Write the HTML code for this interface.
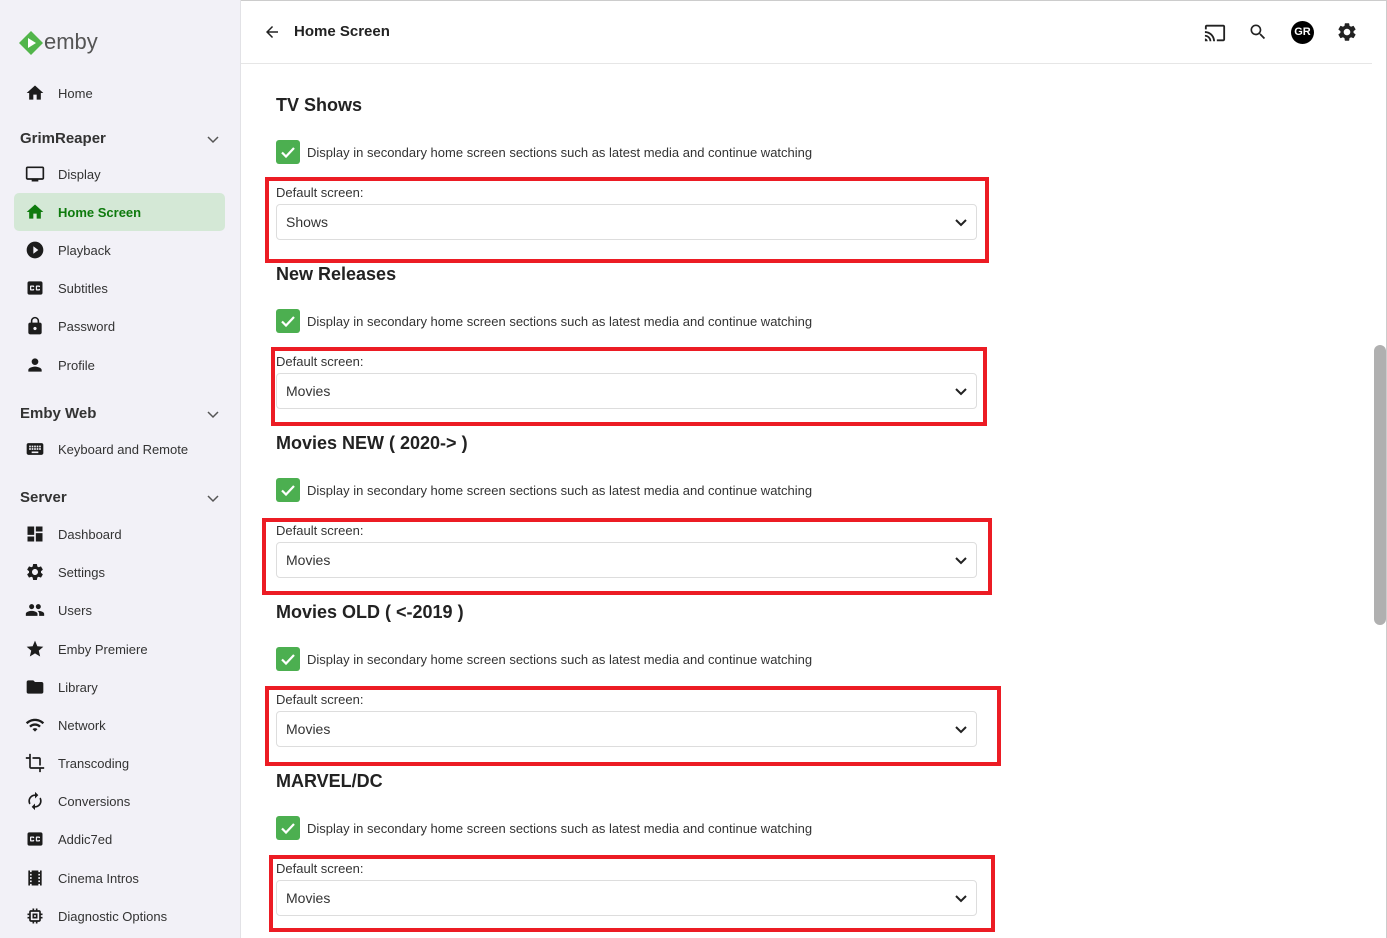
<!DOCTYPE html>
<html><head><meta charset="utf-8"><style>
*{margin:0;padding:0;box-sizing:border-box}
body{width:1387px;height:938px;overflow:hidden;background:#fff;font-family:"Liberation Sans",sans-serif;color:#222;position:relative}
.sb{position:absolute;left:0;top:0;width:241px;height:938px;background:#f2f1f7;border-right:1px solid #e2e2e6}
.a{position:absolute}
.ni{position:absolute;left:0;width:240px;height:20px;font-size:13px;color:#333}
.ni svg{position:absolute;left:25px;top:0;width:20px;height:20px;fill:#1c1c1c}
.ni span{position:absolute;left:58px;top:3px}
.hd{position:absolute;left:20px;font-size:15px;font-weight:bold;color:#333}
.chev{position:absolute;left:206px;width:14px;height:14px}
.h2{position:absolute;left:276px;font-size:18px;font-weight:bold;color:#222}
.cb{position:absolute;left:276px;width:24px;height:24px;background:#4caf50;border-radius:3px}
.cbt{position:absolute;left:307px;font-size:13px;color:#333}
.lbl{position:absolute;left:276px;font-size:13px;color:#333}
.sel{position:absolute;left:276px;width:701px;height:36px;border:1px solid #ddd;border-radius:4px;font-size:14px;color:#333;padding:9px 0 0 9px}
.sel svg{position:absolute;right:8px;top:10px}
.red{position:absolute;border:4px solid #ec1c24}
</style></head><body>
<div class="a" style="left:0;top:0;width:1387px;height:1px;background:#ccc"></div>
<div class="sb"></div>
<!-- logo -->
<svg class="a" style="left:19px;top:31px" width="24" height="24" viewBox="0 0 24 24"><path d="M12 0 L24 12 L12 24 L0 12Z" fill="#52b54b"/><path d="M9 7 L17 12 L9 17Z" fill="#fff"/></svg>
<div class="a" style="left:44px;top:29px;font-size:22px;color:#555">emby</div>

<div class="ni" style="top:83px"><svg viewBox="0 0 24 24"><path d="M10 20v-6h4v6h5v-8h3L12 3 2 12h3v8z"/></svg><span>Home</span></div>
<div class="hd" style="top:130px">GrimReaper</div>
<svg class="chev" style="top:132px" viewBox="0 0 14 14"><path d="M2 5l5 5 5-5" stroke="#555" stroke-width="1.5" fill="none"/></svg>
<div class="ni" style="top:164px"><svg viewBox="0 0 24 24"><path d="M21 3H3c-1.1 0-2 .9-2 2v12c0 1.1.9 2 2 2h5v2h8v-2h5c1.1 0 2-.9 2-2V5c0-1.1-.9-2-2-2zm0 14H3V5h18v12z"/></svg><span>Display</span></div>
<div class="a" style="left:14px;top:193px;width:211px;height:38px;background:#d4e8d6;border-radius:5px"></div>
<div class="ni" style="top:202px"><svg viewBox="0 0 24 24" style="fill:#0e7a0d"><path d="M10 20v-6h4v6h5v-8h3L12 3 2 12h3v8z"/></svg><span style="color:#0e7a0d;font-weight:bold">Home Screen</span></div>
<div class="ni" style="top:240px"><svg viewBox="0 0 24 24"><path d="M12 2C6.48 2 2 6.48 2 12s4.48 10 10 10 10-4.48 10-10S17.52 2 12 2zm-2 14.5v-9l6 4.5-6 4.5z"/></svg><span>Playback</span></div>
<div class="ni" style="top:278px"><svg viewBox="0 0 24 24"><path d="M19 4H5c-1.11 0-2 .9-2 2v12c0 1.1.89 2 2 2h14c1.1 0 2-.9 2-2V6c0-1.1-.9-2-2-2zm-8 7H9.5v-.5h-2v3h2V13H11v1c0 .55-.45 1-1 1H7c-.55 0-1-.45-1-1v-4c0-.55.45-1 1-1h3c.55 0 1 .45 1 1v1zm7 0h-1.5v-.5h-2v3h2V13H18v1c0 .55-.45 1-1 1h-3c-.55 0-1-.45-1-1v-4c0-.55.45-1 1-1h3c.55 0 1 .45 1 1v1z"/></svg><span>Subtitles</span></div>
<div class="ni" style="top:316px"><svg viewBox="0 0 24 24"><path d="M18 8h-1V6c0-2.76-2.24-5-5-5S7 3.24 7 6v2H6c-1.1 0-2 .9-2 2v10c0 1.1.9 2 2 2h12c1.1 0 2-.9 2-2V10c0-1.1-.9-2-2-2zm-6 9c-1.1 0-2-.9-2-2s.9-2 2-2 2 .9 2 2-.9 2-2 2zm3.1-9H8.9V6c0-1.71 1.39-3.1 3.1-3.1 1.71 0 3.1 1.39 3.1 3.1v2z"/></svg><span>Password</span></div>
<div class="ni" style="top:355px"><svg viewBox="0 0 24 24"><path d="M12 12c2.21 0 4-1.79 4-4s-1.79-4-4-4-4 1.79-4 4 1.79 4 4 4zm0 2c-2.67 0-8 1.34-8 4v2h16v-2c0-2.66-5.33-4-8-4z"/></svg><span>Profile</span></div>
<div class="hd" style="top:405px">Emby Web</div>
<svg class="chev" style="top:407px" viewBox="0 0 14 14"><path d="M2 5l5 5 5-5" stroke="#555" stroke-width="1.5" fill="none"/></svg>
<div class="ni" style="top:439px"><svg viewBox="0 0 24 24"><path d="M20 5H4c-1.1 0-2 .9-2 2v10c0 1.1.9 2 2 2h16c1.1 0 2-.9 2-2V7c0-1.1-.9-2-2-2zm-9 3h2v2h-2V8zm0 3h2v2h-2v-2zM8 8h2v2H8V8zm0 3h2v2H8v-2zm-1 2H5v-2h2v2zm0-3H5V8h2v2zm9 7H8v-2h8v2zm0-4h-2v-2h2v2zm0-3h-2V8h2v2zm3 3h-2v-2h2v2zm0-3h-2V8h2v2z"/></svg><span>Keyboard and Remote</span></div>
<div class="hd" style="top:489px">Server</div>
<svg class="chev" style="top:491px" viewBox="0 0 14 14"><path d="M2 5l5 5 5-5" stroke="#555" stroke-width="1.5" fill="none"/></svg>
<div class="ni" style="top:524px"><svg viewBox="0 0 24 24"><path d="M3 13h8V3H3v10zm0 8h8v-6H3v6zm10 0h8V11h-8v10zm0-18v6h8V3h-8z"/></svg><span>Dashboard</span></div>
<div class="ni" style="top:562px"><svg viewBox="0 0 24 24"><path d="M19.14 12.94c.04-.3.06-.61.06-.94 0-.32-.02-.64-.07-.94l2.03-1.58c.18-.14.23-.41.12-.61l-1.92-3.32c-.12-.22-.37-.29-.59-.22l-2.39.96c-.5-.38-1.03-.7-1.62-.94l-.36-2.54c-.04-.24-.24-.41-.48-.41h-3.84c-.24 0-.43.17-.47.41l-.36 2.54c-.59.24-1.13.57-1.62.94l-2.39-.96c-.22-.08-.47 0-.59.22L2.74 8.87c-.12.21-.08.47.12.61l2.03 1.58c-.05.3-.09.63-.09.94s.02.64.07.94l-2.03 1.58c-.18.14-.23.41-.12.61l1.92 3.32c.12.22.37.29.59.22l2.39-.96c.5.38 1.03.7 1.62.94l.36 2.54c.05.24.24.41.48.41h3.84c.24 0 .44-.17.47-.41l.36-2.54c.59-.24 1.13-.56 1.62-.94l2.39.96c.22.08.47 0 .59-.22l1.92-3.32c.12-.22.07-.47-.12-.61l-2.01-1.58zM12 15.6c-1.98 0-3.6-1.62-3.6-3.6s1.62-3.6 3.6-3.6 3.6 1.62 3.6 3.6-1.62 3.6-3.6 3.6z"/></svg><span>Settings</span></div>
<div class="ni" style="top:600px"><svg viewBox="0 0 24 24"><path d="M16 11c1.66 0 2.99-1.34 2.99-3S17.66 5 16 5c-1.66 0-3 1.34-3 3s1.34 3 3 3zm-8 0c1.66 0 2.99-1.34 2.99-3S9.66 5 8 5C6.34 5 5 6.34 5 8s1.34 3 3 3zm0 2c-2.33 0-7 1.17-7 3.5V19h14v-2.5c0-2.33-4.67-3.5-7-3.5zm8 0c-.29 0-.62.02-.97.05 1.16.84 1.97 1.97 1.97 3.45V19h6v-2.5c0-2.33-4.67-3.5-7-3.5z"/></svg><span>Users</span></div>
<div class="ni" style="top:639px"><svg viewBox="0 0 24 24"><path d="M12 17.27L18.18 21l-1.64-7.03L22 9.24l-7.19-.61L12 2 9.19 8.63 2 9.24l5.46 4.73L5.82 21z"/></svg><span>Emby Premiere</span></div>
<div class="ni" style="top:677px"><svg viewBox="0 0 24 24"><path d="M10 4H4c-1.1 0-2 .9-2 2v12c0 1.1.9 2 2 2h16c1.1 0 2-.9 2-2V8c0-1.1-.9-2-2-2h-8l-2-2z"/></svg><span>Library</span></div>
<div class="ni" style="top:715px"><svg viewBox="0 0 24 24"><path d="M1 9l2 2c4.97-4.97 13.03-4.97 18 0l2-2C16.93 2.93 7.08 2.93 1 9zm8 8l3 3 3-3c-1.65-1.66-4.34-1.66-6 0zm-4-4l2 2c2.76-2.76 7.24-2.76 10 0l2-2C15.14 9.14 8.87 9.14 5 13z"/></svg><span>Network</span></div>
<div class="ni" style="top:753px"><svg viewBox="0 0 24 24"><path d="M17 15h2V7c0-1.1-.9-2-2-2H9v2h8v8zM7 17V1H5v4H1v2h4v10c0 1.1.9 2 2 2h10v4h2v-4h4v-2H7z"/></svg><span>Transcoding</span></div>
<div class="ni" style="top:791px"><svg viewBox="0 0 24 24"><path d="M12 6v3l4-4-4-4v3c-4.42 0-8 3.58-8 8 0 1.57.46 3.03 1.24 4.26L6.7 14.8c-.45-.83-.7-1.79-.7-2.8 0-3.31 2.69-6 6-6zm6.76 1.74L17.3 9.2c.44.84.7 1.79.7 2.8 0 3.31-2.69 6-6 6v-3l-4 4 4 4v-3c4.42 0 8-3.58 8-8 0-1.57-.46-3.03-1.24-4.26z"/></svg><span>Conversions</span></div>
<div class="ni" style="top:829px"><svg viewBox="0 0 24 24"><path d="M19 4H5c-1.11 0-2 .9-2 2v12c0 1.1.89 2 2 2h14c1.1 0 2-.9 2-2V6c0-1.1-.9-2-2-2zm-8 7H9.5v-.5h-2v3h2V13H11v1c0 .55-.45 1-1 1H7c-.55 0-1-.45-1-1v-4c0-.55.45-1 1-1h3c.55 0 1 .45 1 1v1zm7 0h-1.5v-.5h-2v3h2V13H18v1c0 .55-.45 1-1 1h-3c-.55 0-1-.45-1-1v-4c0-.55.45-1 1-1h3c.55 0 1 .45 1 1v1z"/></svg><span>Addic7ed</span></div>
<div class="ni" style="top:868px"><svg viewBox="0 0 24 24"><path d="M18 3v2h-2V3H8v2H6V3H4v18h2v-2h2v2h8v-2h2v2h2V3h-2zM8 17H6v-2h2v2zm0-4H6v-2h2v2zm0-4H6V7h2v2zm10 8h-2v-2h2v2zm0-4h-2v-2h2v2zm0-4h-2V7h2v2z"/></svg><span>Cinema Intros</span></div>
<div class="ni" style="top:906px"><svg viewBox="0 0 24 24"><path d="M15 9H9v6h6V9zm-2 4h-2v-2h2v2zm8-2V9h-2V7c0-1.1-.9-2-2-2h-2V3h-2v2h-2V3H9v2H7c-1.1 0-2 .9-2 2v2H3v2h2v2H3v2h2v2c0 1.1.9 2 2 2h2v2h2v-2h2v2h2v-2h2c1.1 0 2-.9 2-2v-2h2v-2h-2v-2h2zm-4 6H7V7h10v10z"/></svg><span>Diagnostic Options</span></div>

<!-- header -->
<svg class="a" style="left:263px;top:23px" width="18" height="18" viewBox="0 0 24 24"><path d="M20 11H7.83l5.59-5.59L12 4l-8 8 8 8 1.41-1.41L7.83 13H20v-2z" fill="#222"/></svg>
<div class="a" style="left:294px;top:23px;font-size:15px;font-weight:bold;color:#222">Home Screen</div>
<div class="a" style="left:241px;top:63px;width:1131px;height:1px;background:#e6e6e6"></div>
<svg class="a" style="left:1204px;top:22px" width="22" height="22" viewBox="0 0 24 24"><path d="M21 3H3c-1.1 0-2 .9-2 2v3h2V5h18v14h-7v2h7c1.1 0 2-.9 2-2V5c0-1.1-.9-2-2-2zM1 18v3h3c0-1.66-1.34-3-3-3zm0-4v2c2.76 0 5 2.24 5 5h2c0-3.87-3.13-7-7-7zm0-4v2c4.97 0 9 4.03 9 9h2c0-6.08-4.93-11-11-11z" fill="#222"/></svg>
<svg class="a" style="left:1248px;top:22px" width="20" height="20" viewBox="0 0 24 24"><path d="M15.5 14h-.79l-.28-.27C15.41 12.59 16 11.11 16 9.5 16 5.91 13.09 3 9.5 3S3 5.91 3 9.5 5.91 16 9.5 16c1.61 0 3.09-.59 4.23-1.57l.27.28v.79l5 4.99L20.49 19l-4.99-5zm-6 0C7.01 14 5 11.99 5 9.5S7.01 5 9.5 5 14 7.01 14 9.5 11.99 14 9.5 14z" fill="#222"/></svg>
<div class="a" style="left:1291px;top:21px;width:23px;height:23px;border-radius:50%;background:#000;color:#fff;font-size:11px;font-weight:bold;text-align:center;line-height:23px">GR</div>
<svg class="a" style="left:1336px;top:21px" width="22" height="22" viewBox="0 0 24 24"><path d="M19.14 12.94c.04-.3.06-.61.06-.94 0-.32-.02-.64-.07-.94l2.03-1.58c.18-.14.23-.41.12-.61l-1.92-3.32c-.12-.22-.37-.29-.59-.22l-2.39.96c-.5-.38-1.03-.7-1.62-.94l-.36-2.54c-.04-.24-.24-.41-.48-.41h-3.84c-.24 0-.43.17-.47.41l-.36 2.54c-.59.24-1.130.57-1.62.94l-2.39-.96c-.22-.08-.47 0-.59.22L2.74 8.87c-.12.21-.08.47.12.61l2.03 1.58c-.05.3-.09.63-.09.94s.02.64.07.94l-2.03 1.58c-.18.14-.23.41-.12.61l1.92 3.32c.12.22.37.29.59.22l2.39-.96c.5.38 1.03.7 1.62.94l.36 2.54c.05.24.24.41.48.41h3.840c.24 0 .44-.17.47-.41l.36-2.54c.59-.24 1.13-.56 1.62-.94l2.39.96c.22.08.47 0 .59-.22l1.92-3.32c.12-.22.07-.47-.12-.61l-2.01-1.58zM12 15.6c-1.98 0-3.6-1.62-3.6-3.6s1.62-3.6 3.6-3.6 3.6 1.62 3.6 3.6-1.62 3.6-3.6 3.6z" fill="#222"/></svg>
<div class="a" style="left:1386px;top:0;width:1px;height:938px;background:#ccc"></div>
<div class="a" style="left:1374px;top:345px;width:12px;height:280px;background:#b0b0b0;border-radius:6px"></div>

<!-- sections -->
<div class="h2" style="top:95px">TV Shows</div>
<div class="cb" style="top:140px"><svg width="24" height="24" viewBox="0 0 24 24"><path d="M6 12.5l4 4 8-8.5" stroke="#fff" stroke-width="2.2" fill="none"/></svg></div>
<div class="cbt" style="top:145px">Display in secondary home screen sections such as latest media and continue watching</div>
<div class="lbl" style="top:185px">Default screen:</div>
<div class="sel" style="top:204px">Shows<svg width="14" height="14" viewBox="0 0 14 14"><path d="M2 5l5 5 5-5" stroke="#222" stroke-width="2" fill="none"/></svg></div>
<div class="red" style="left:265px;top:177px;width:724px;height:86px"></div>

<div class="h2" style="top:264px">New Releases</div>
<div class="cb" style="top:309px"><svg width="24" height="24" viewBox="0 0 24 24"><path d="M6 12.5l4 4 8-8.5" stroke="#fff" stroke-width="2.2" fill="none"/></svg></div>
<div class="cbt" style="top:314px">Display in secondary home screen sections such as latest media and continue watching</div>
<div class="lbl" style="top:354px">Default screen:</div>
<div class="sel" style="top:373px">Movies<svg width="14" height="14" viewBox="0 0 14 14"><path d="M2 5l5 5 5-5" stroke="#222" stroke-width="2" fill="none"/></svg></div>
<div class="red" style="left:271px;top:347px;width:716px;height:79px"></div>

<div class="h2" style="top:433px">Movies NEW ( 2020-&gt; )</div>
<div class="cb" style="top:478px"><svg width="24" height="24" viewBox="0 0 24 24"><path d="M6 12.5l4 4 8-8.5" stroke="#fff" stroke-width="2.2" fill="none"/></svg></div>
<div class="cbt" style="top:483px">Display in secondary home screen sections such as latest media and continue watching</div>
<div class="lbl" style="top:523px">Default screen:</div>
<div class="sel" style="top:542px">Movies<svg width="14" height="14" viewBox="0 0 14 14"><path d="M2 5l5 5 5-5" stroke="#222" stroke-width="2" fill="none"/></svg></div>
<div class="red" style="left:262px;top:518px;width:730px;height:77px"></div>

<div class="h2" style="top:602px">Movies OLD ( &lt;-2019 )</div>
<div class="cb" style="top:647px"><svg width="24" height="24" viewBox="0 0 24 24"><path d="M6 12.5l4 4 8-8.5" stroke="#fff" stroke-width="2.2" fill="none"/></svg></div>
<div class="cbt" style="top:652px">Display in secondary home screen sections such as latest media and continue watching</div>
<div class="lbl" style="top:692px">Default screen:</div>
<div class="sel" style="top:711px">Movies<svg width="14" height="14" viewBox="0 0 14 14"><path d="M2 5l5 5 5-5" stroke="#222" stroke-width="2" fill="none"/></svg></div>
<div class="red" style="left:265px;top:686px;width:736px;height:80px"></div>

<div class="h2" style="top:771px">MARVEL/DC</div>
<div class="cb" style="top:816px"><svg width="24" height="24" viewBox="0 0 24 24"><path d="M6 12.5l4 4 8-8.5" stroke="#fff" stroke-width="2.2" fill="none"/></svg></div>
<div class="cbt" style="top:821px">Display in secondary home screen sections such as latest media and continue watching</div>
<div class="lbl" style="top:861px">Default screen:</div>
<div class="sel" style="top:880px">Movies<svg width="14" height="14" viewBox="0 0 14 14"><path d="M2 5l5 5 5-5" stroke="#222" stroke-width="2" fill="none"/></svg></div>
<div class="red" style="left:269px;top:855px;width:726px;height:77px"></div>
</body></html>
